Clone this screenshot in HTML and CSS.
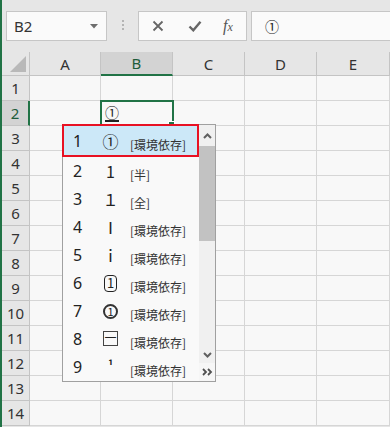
FILE: index.html
```html
<!DOCTYPE html>
<html lang="ja">
<head>
    <meta charset="UTF-8">
    <title>Excel IME</title>
    <link rel="stylesheet" href="styles.css">
</head>
<body>
    <div class="app">
        <div class="toolbar">
            <div class="namebox">
                <span>B2</span>
                <svg class="caret" width="8" height="5" viewBox="0 0 8 5"><path d="M0 0h8L4 4.5z" fill="#6d6d6d"/></svg>
            </div>
            <div class="grip"><i></i><i></i><i></i></div>
            <div class="fxbox">
                <svg width="12" height="12" viewBox="0 0 12 12"><path d="M1.5 1.5l9 9M10.5 1.5l-9 9" stroke="#666" stroke-width="1.8" fill="none"/></svg>
                <svg width="14" height="12" viewBox="0 0 14 12"><path d="M1.5 6.5l3.8 3.8L12.5 1.8" stroke="#666" stroke-width="2.4" fill="none"/></svg>
                <span class="fx"><i>f</i><em>x</em></span>
            </div>
            <div class="formula">①</div>
        </div>

        <div class="sheet">
            <div class="corner"><b></b></div>
            <div class="colhead">A</div>
            <div class="colhead on">B</div>
            <div class="colhead">C</div>
            <div class="colhead">D</div>
            <div class="colhead">E</div>
        </div>

        <div class="popup">
            <div class="list">
                <div class="item sel"><span class="num">1</span><span class="ch">①</span><span class="lbl">[環境依存]</span></div>
                <div class="item"><span class="num">2</span><span class="ch">1</span><span class="lbl">[半]</span></div>
                <div class="item"><span class="num">3</span><span class="ch">１</span><span class="lbl">[全]</span></div>
                <div class="item"><span class="num">4</span><span class="ch">Ⅰ</span><span class="lbl">[環境依存]</span></div>
                <div class="item"><span class="num">5</span><span class="ch">ⅰ</span><span class="lbl">[環境依存]</span></div>
                <div class="item"><span class="num">6</span><span class="ch box">1</span><span class="lbl">[環境依存]</span></div>
                <div class="item"><span class="num">7</span><span class="ch ring">1</span><span class="lbl">[環境依存]</span></div>
                <div class="item"><span class="num">8</span><span class="ch sq">一</span><span class="lbl">[環境依存]</span></div>
                <div class="item"><span class="num">9</span><span class="ch sup">¹</span><span class="lbl">[環境依存]</span></div>
            </div>
            <div class="scroll">
                <div class="sbtn"><svg width="9" height="6" viewBox="0 0 9 6"><path d="M1 5l3.5-3.5L8 5" stroke="#606060" stroke-width="2" fill="none"/></svg></div>
                <div class="thumb"></div>
                <div class="track"></div>
                <div class="sbtn down"><svg width="9" height="6" viewBox="0 0 9 6"><path d="M1 1l3.5 3.5L8 1" stroke="#606060" stroke-width="2" fill="none"/></svg></div>
                <div class="more"><svg width="11" height="8" viewBox="0 0 11 8"><path d="M1 1l3 3-3 3M6 1l3 3-3 3" stroke="#505050" stroke-width="1.8" fill="none"/></svg></div>
            </div>
        </div>
    </div>
    <script>
        // build the 14 sheet rows
        const sheet = document.querySelector(".sheet");
        for (let r = 1; r <= 14; r++) {
            const head = document.createElement("div");
            head.className = "rowhead" + (r === 2 ? " on" : "");
            head.textContent = r;
            sheet.appendChild(head);
            for (let c = 0; c < 5; c++) {
                const cell = document.createElement("div");
                cell.className = "cell";
                if (r === 2 && c === 1) {
                    cell.className = "cell active";
                    cell.innerHTML = "<u>①</u>";
                }
                sheet.appendChild(cell);
            }
        }
    </script>
</body>
</html>
```

FILE: styles.css
```css
body {
    margin: 0;
    font-family: "Noto Sans", "Noto Sans CJK JP", sans-serif;
    color: #222;
}
.app {
    position: relative;
    width: 390px;
    height: 427px;
    overflow: hidden;
    box-sizing: border-box;
    border-left: 2px solid #217346;
    background: #e6e6e6;
}
.toolbar {
    display: flex;
    align-items: flex-start;
    height: 52px;
    padding-top: 11px;
    box-sizing: border-box;
}
.namebox {
    display: flex;
    align-items: center;
    justify-content: space-between;
    width: 101px;
    height: 30px;
    margin-left: 4px;
    padding: 0 8px 0 7px;
    box-sizing: border-box;
    border: 1px solid #c6c6c6;
    background: #fafafa;
    font-size: 15px;
    color: #333;
}
.grip {
    display: flex;
    flex-direction: column;
    gap: 2px;
    margin: 9px 14px 0 15px;
}
.grip i {
    width: 2px;
    height: 2px;
    background: #b4b4b4;
}
.fxbox {
    display: flex;
    align-items: center;
    width: 109px;
    height: 30px;
    padding: 0 0 0 13px;
    box-sizing: border-box;
    border: 1px solid #c6c6c6;
    background: #fafafa;
}
.fxbox svg:first-child {
    margin-right: 24px;
}
.fxbox svg:nth-child(2) {
    margin-right: 21px;
}
.fx {
    font-family: "Liberation Serif", serif;
    font-size: 16px;
    color: #555;
}
.fx em {
    font-size: 12px;
    font-style: italic;
}
.formula {
    flex: 1;
    height: 30px;
    margin-left: 4px;
    padding-left: 13px;
    box-sizing: border-box;
    border: 1px solid #c6c6c6;
    border-right: none;
    background: #fafafa;
    font-family: "Noto Sans CJK JP", sans-serif;
    font-size: 14px;
    line-height: 28px;
    color: #222;
}

.sheet {
    display: grid;
    grid-template-columns: 28px 71px 72px 72px 72px 73px;
    grid-template-rows: 24px repeat(14, 25px);
    background: #f8f8f8;
}
.corner, .colhead, .rowhead {
    background: #e6e6e6;
    box-sizing: border-box;
    border-right: 1px solid #c4c4c4;
    border-bottom: 1px solid #c4c4c4;
}
.corner {
    display: flex;
    align-items: flex-end;
    justify-content: flex-end;
    padding: 0 3px 3px 0;
}
.corner b {
    width: 0;
    height: 0;
    border-left: 16px solid transparent;
    border-bottom: 16px solid #b9b9b9;
}
.colhead {
    display: flex;
    align-items: center;
    justify-content: center;
    font-size: 15px;
    color: #333;
}
.colhead.on {
    background: #d3d3d3;
    border-bottom: 2px solid #217346;
    color: #1e5c3a;
}
.rowhead {
    display: flex;
    align-items: center;
    justify-content: center;
    font-size: 15px;
    color: #333;
}
.rowhead.on {
    background: #d3d3d3;
    border-right: 2px solid #217346;
    color: #1e5c3a;
}
.cell {
    box-sizing: border-box;
    border-right: 1px solid #d6d6d6;
    border-bottom: 1px solid #d6d6d6;
}
.cell.active {
    position: relative;
    z-index: 1;
    outline: 2px solid #217346;
    outline-offset: -1px;
    padding: 2px 0 0 4px;
    font-family: "Noto Sans CJK JP", sans-serif;
    font-size: 14px;
    line-height: 18px;
}
.cell.active u {
    text-decoration-thickness: 2px;
    text-underline-offset: 2px;
}
.cell.active::after {
    content: "";
    position: absolute;
    right: -3px;
    bottom: -3px;
    width: 5px;
    height: 5px;
    background: #217346;
    border: 1px solid #fff;
}

.popup {
    position: absolute;
    left: 60px;
    top: 124px;
    z-index: 2;
    display: flex;
    width: 154px;
    height: 258px;
    box-sizing: border-box;
    border: 1px solid #a0a0a0;
    background: #f9f9f9;
}
.list {
    width: 136px;
}
.item {
    display: flex;
    align-items: center;
    height: 28px;
    padding-left: 10px;
    box-sizing: border-box;
}
.item.sel {
    width: 137px;
    height: 33px;
    margin: -1px 0 0 -1px;
    padding-left: 9px;
    border: 2px solid #e81123;
    background: #cce8f8;
}
.num {
    width: 24px;
    font-size: 16px;
    color: #222;
}
.ch {
    width: 27px;
    text-align: center;
    font-family: "Noto Sans CJK JP", sans-serif;
    font-size: 16px;
    color: #222;
}
.ch.box {
    width: 13px;
    height: 17px;
    margin: 0 7px;
    box-sizing: border-box;
    border: 1.5px solid #222;
    border-radius: 4px;
    font-size: 13px;
    line-height: 14px;
}
.ch.ring {
    width: 15px;
    height: 15px;
    margin: 0 6px;
    box-sizing: border-box;
    border: 2px solid #333;
    border-radius: 50%;
    font-size: 11px;
    line-height: 11px;
}
.ch.sq {
    width: 15px;
    height: 15px;
    margin: 0 6px 2px;
    box-sizing: border-box;
    border: 1px solid #444;
    font-size: 12px;
    line-height: 12px;
}
.ch.sup {
    margin-bottom: 6px;
    font-size: 12px;
    font-weight: bold;
}
.lbl {
    margin-left: 6px;
    padding-top: 7px;
    font-family: "Noto Sans CJK JP", sans-serif;
    font-size: 12px;
    color: #333;
}
.scroll {
    display: flex;
    flex-direction: column;
    width: 16px;
    background: #f0f0f0;
}
.sbtn {
    display: flex;
    align-items: center;
    justify-content: center;
    height: 21px;
}
.sbtn.down {
    height: 17px;
}
.thumb {
    height: 95px;
    background: #c2c2c2;
}
.track {
    flex: 1;
}
.more {
    display: flex;
    align-items: center;
    justify-content: center;
    height: 18px;
    background: #f6f6f6;
}
```
